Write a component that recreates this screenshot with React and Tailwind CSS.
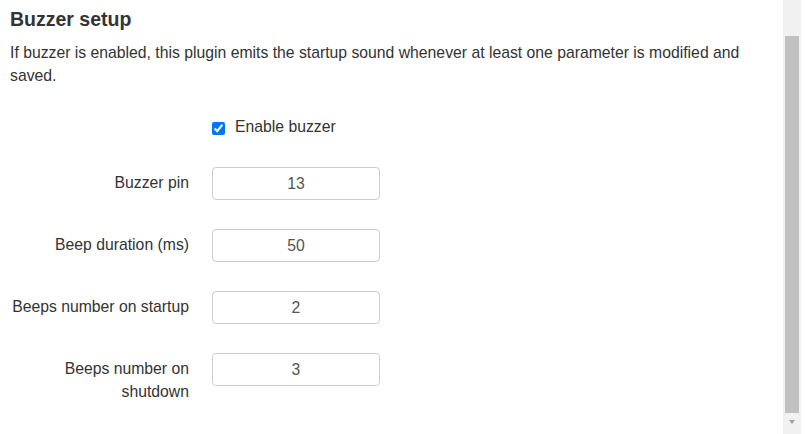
import React from "react";

const rows = [
  { label: "Buzzer pin", value: "13" },
  { label: "Beep duration (ms)", value: "50" },
  { label: "Beeps number on startup", value: "2" },
  { label: "Beeps number on shutdown", value: "3" },
];

export default function App() {
  return (
    <div className="flex h-[434px] w-[805px] overflow-hidden bg-white font-['Liberation_Sans',Arial,sans-serif] text-[#333]">
      <div className="flex-1 pl-[10px] pr-[24px]">
        <h3 className="mt-[8px] text-[19.5px] font-bold leading-[23.4px]">Buzzer setup</h3>
        <p className="mt-[10px] text-[15.75px] leading-[23px]">
          If buzzer is enabled, this plugin emits the startup sound whenever at least one parameter is modified and saved.
        </p>
        <div className="mt-[28px] flex items-center gap-[23px] text-[15.75px] leading-[23px]">
          <div className="w-[179px]" />
          <label className="flex items-center">
            <input
              type="checkbox"
              checked
              readOnly
              className="m-0 mt-[4px] h-[13px] w-[13px] accent-[#0075ff]"
            />
            <span className="ml-[10px]">Enable buzzer</span>
          </label>
        </div>
        <div className="mt-[29px] flex flex-col gap-[29px]">
          {rows.map((r) => (
            <div key={r.label} className="flex items-start gap-[23px] text-[15.75px] leading-[23px]">
              <div className="w-[179px] pt-[4px] text-right">{r.label}</div>
              <div className="flex h-[33px] w-[168px] items-center justify-center rounded-[4px] border border-[#ccc] text-[#555]">
                {r.value}
              </div>
            </div>
          ))}
        </div>
      </div>
      <div className="flex h-full w-[18px] flex-col items-center bg-[#f1f1f1]">
        <div className="mt-[36px] h-[377px] w-[14px] bg-[#c1c1c1]" />
        <div className="mt-[7px] h-0 w-0 border-x-[3.5px] border-t-[4px] border-x-transparent border-t-[#a3a3a3]" />
      </div>
      <div className="w-[4px]" />
    </div>
  );
}
